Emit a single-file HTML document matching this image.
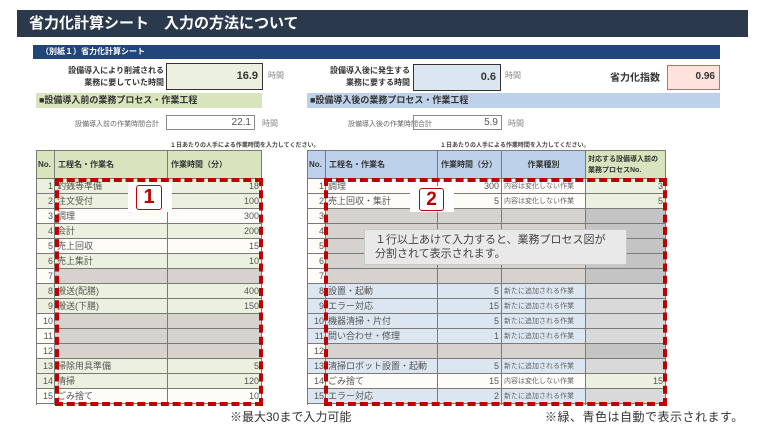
<!DOCTYPE html>
<html><head><meta charset="utf-8"><style>
*{margin:0;padding:0;box-sizing:border-box}
body{width:759px;height:436px;background:#fff;position:relative;overflow:hidden;font-family:"Liberation Sans","Noto Sans CJK JP",sans-serif;color:#333}
.a{position:absolute}
.clip{position:absolute;overflow:hidden}
table{position:absolute;left:0;top:0;border-collapse:collapse;table-layout:fixed;font-size:9px;color:#555}
td{border:1px solid #7a7a7a;height:15px;padding:0 2px;white-space:nowrap;overflow:hidden;line-height:13px}
td.n{text-align:right;padding-right:1px}
td.r{text-align:right}
.g{background:#ebf1de}.w{background:#fdfcf8}.b{background:#dce6f1}.x{background:#d9d9d9}.lg{background:#d7e4bd}
.gy td.f{background:#d6d3cf}
th{border:1px solid #7a7a7a;font-size:8px;font-weight:bold;text-align:left;padding:0 3px;color:#333;height:28px;white-space:nowrap;overflow:hidden}
.t{font-size:7px;color:#666}
.dash{position:absolute;border:4px dashed #c00000}
</style></head><body>
<div class="a" style="left:17px;top:10px;width:731px;height:27px;background:#2b394d;color:#fff;font-size:15px;font-weight:bold;line-height:27px;padding-left:12px">省力化計算シート　入力の方法について</div>
<div class="a" style="left:33px;top:45px;width:687px;height:14px;background:#22467a;color:#fff;font-size:8px;font-weight:bold;line-height:14px;padding-left:8px">（別紙１）省力化計算シート</div>

<div class="a" style="left:60px;top:65px;width:104px;font-size:8px;font-weight:bold;text-align:right;line-height:12px">設備導入により削減される<br>業務に要していた時間</div>
<div class="a" style="left:166px;top:63px;width:97px;height:27px;border:1.5px solid #333;background:#ebf1de;font-size:11px;font-weight:bold;text-align:right;line-height:24px;padding-right:4px">16.9</div>
<div class="a" style="left:268px;top:70px;font-size:8px;color:#888">時間</div>

<div class="a" style="left:310px;top:65px;width:100px;font-size:8px;font-weight:bold;text-align:right;line-height:12px">設備導入後に発生する<br>業務に要する時間</div>
<div class="a" style="left:413px;top:64px;width:88px;height:27px;border:1.5px solid #333;background:#dce6f1;font-size:11px;font-weight:bold;text-align:right;line-height:24px;padding-right:4px">0.6</div>
<div class="a" style="left:505px;top:70px;font-size:8px;color:#888">時間</div>
<div class="a" style="left:610px;top:69px;font-size:10px;font-weight:bold">省力化指数</div>
<div class="a" style="left:667px;top:65px;width:53px;height:25px;border:1.5px solid #e06060;background:#fde3dc;font-size:10px;font-weight:bold;text-align:right;line-height:22px;padding-right:4px">0.96</div>

<div class="a" style="left:36px;top:93px;width:226px;height:15px;background:#d8e4bc;font-size:9px;font-weight:bold;line-height:15px;padding-left:3px">■設備導入前の業務プロセス・作業工程</div>
<div class="a" style="left:307px;top:93px;width:413px;height:15px;background:#bdd2ea;font-size:9px;font-weight:bold;line-height:15px;padding-left:3px">■設備導入後の業務プロセス・作業工程</div>

<div class="a" style="left:75px;top:119px;font-size:7px;color:#666">設備導入前の作業時間合計</div>
<div class="a" style="left:166px;top:115px;width:89px;height:15px;border:1px solid #888;font-size:10px;text-align:right;line-height:13px;padding-right:3px;color:#555">22.1</div>
<div class="a" style="left:262px;top:118px;font-size:8px;color:#888">時間</div>
<div class="a" style="left:348px;top:119px;font-size:7px;color:#666">設備導入後の作業時間合計</div>
<div class="a" style="left:413px;top:115px;width:89px;height:15px;border:1px solid #888;font-size:10px;text-align:right;line-height:13px;padding-right:3px;color:#555">5.9</div>
<div class="a" style="left:508px;top:118px;font-size:8px;color:#888">時間</div>

<div class="a" style="left:170px;top:140px;font-size:6px;font-weight:bold;color:#444">１日あたりの人手による作業時間を入力してください。</div>
<div class="a" style="left:440px;top:140px;font-size:6px;font-weight:bold;color:#444">１日あたりの人手による作業時間を入力してください。</div>

<div class="clip" style="left:36px;top:150px;width:226px;height:255px">
<table style="width:225px">
<colgroup><col style="width:18px"><col style="width:113px"><col style="width:94px"></colgroup>
<tr class="lg"><th style="padding:0 1px">No.</th><th>工程名・作業名</th><th>作業時間（分）</th></tr>
<tr class="g"><td class="n">1</td><td>釣銭等準備</td><td class="r">18</td></tr>
<tr class="g"><td class="n">2</td><td>注文受付</td><td class="r">100</td></tr>
<tr class="w"><td class="n">3</td><td>調理</td><td class="r">300</td></tr>
<tr class="g"><td class="n">4</td><td>会計</td><td class="r">200</td></tr>
<tr class="w"><td class="n">5</td><td>売上回収</td><td class="r">15</td></tr>
<tr class="g"><td class="n">6</td><td>売上集計</td><td class="r">10</td></tr>
<tr class="w gy"><td class="n">7</td><td class="f"></td><td class="f"></td></tr>
<tr class="g"><td class="n">8</td><td>搬送(配膳)</td><td class="r">400</td></tr>
<tr class="g"><td class="n">9</td><td>搬送(下膳)</td><td class="r">150</td></tr>
<tr class="w gy"><td class="n">10</td><td class="f"></td><td class="f"></td></tr>
<tr class="w gy"><td class="n">11</td><td class="f"></td><td class="f"></td></tr>
<tr class="w gy"><td class="n">12</td><td class="f"></td><td class="f"></td></tr>
<tr class="g"><td class="n">13</td><td>掃除用具準備</td><td class="r">5</td></tr>
<tr class="g"><td class="n">14</td><td>清掃</td><td class="r">120</td></tr>
<tr class="w"><td class="n">15</td><td>ごみ捨て</td><td class="r">10</td></tr>
<tr class="w"><td class="n">16</td><td></td><td></td></tr>
</table></div>

<div class="clip" style="left:307px;top:150px;width:359px;height:255px">
<table style="width:358px">
<colgroup><col style="width:18px"><col style="width:112px"><col style="width:64px"><col style="width:84px"><col style="width:80px"></colgroup>
<tr><th style="padding:0 1px;background:#bdd2ea">No.</th><th style="background:#bdd2ea">工程名・作業名</th><th style="background:#bdd2ea">作業時間（分）</th><th style="background:#bdd2ea;text-align:center">作業種別</th><th style="background:#d7e4bd;line-height:11px;font-size:7px;padding:0 2px">対応する設備導入前の<br>業務プロセスNo.</th></tr>
<tr class="w"><td class="n">1</td><td>調理</td><td class="r">300</td><td class="t">内容は変化しない作業</td><td class="r g">3</td></tr>
<tr class="w"><td class="n">2</td><td>売上回収・集計</td><td class="r">5</td><td class="t">内容は変化しない作業</td><td class="r g">5</td></tr>
<tr class="w gy"><td class="n">3</td><td class="f"></td><td class="f"></td><td class="f"></td><td class="f" style="background:#c4c4c4"></td></tr>
<tr class="w gy"><td class="n">4</td><td class="f"></td><td class="f"></td><td class="f"></td><td class="f" style="background:#c4c4c4"></td></tr>
<tr class="w gy"><td class="n">5</td><td class="f"></td><td class="f"></td><td class="f"></td><td class="f" style="background:#c4c4c4"></td></tr>
<tr class="w gy"><td class="n">6</td><td class="f"></td><td class="f"></td><td class="f"></td><td class="f" style="background:#c4c4c4"></td></tr>
<tr class="w gy"><td class="n">7</td><td class="f"></td><td class="f"></td><td class="f"></td><td class="f" style="background:#c4c4c4"></td></tr>
<tr class="b"><td class="n">8</td><td>設置・起動</td><td class="r">5</td><td class="t">新たに追加される作業</td><td class="x"></td></tr>
<tr class="b"><td class="n">9</td><td>エラー対応</td><td class="r">15</td><td class="t">新たに追加される作業</td><td class="x"></td></tr>
<tr class="b"><td class="n">10</td><td>機器清掃・片付</td><td class="r">5</td><td class="t">新たに追加される作業</td><td class="x"></td></tr>
<tr class="b"><td class="n">11</td><td>問い合わせ・修理</td><td class="r">1</td><td class="t">新たに追加される作業</td><td class="x"></td></tr>
<tr class="w gy"><td class="n">12</td><td class="f"></td><td class="f"></td><td class="f"></td><td class="f" style="background:#c4c4c4"></td></tr>
<tr class="b"><td class="n">13</td><td>清掃ロボット設置・起動</td><td class="r">5</td><td class="t">新たに追加される作業</td><td class="x"></td></tr>
<tr class="w"><td class="n">14</td><td>ごみ捨て</td><td class="r">15</td><td class="t">内容は変化しない作業</td><td class="r g">15</td></tr>
<tr class="b"><td class="n">15</td><td>エラー対応</td><td class="r">2</td><td class="t">新たに追加される作業</td><td class="x"></td></tr>
<tr class="w"><td class="n">16</td><td></td><td></td><td></td><td></td></tr>
</table></div>

<div class="dash" style="left:55px;top:178px;width:208px;height:228px"></div>
<div class="dash" style="left:324px;top:178px;width:343px;height:228px"></div>
<div class="a" style="left:128px;top:182px;width:44px;height:30px;background:#fff"></div>
<div class="a" style="left:136px;top:185px;width:26px;height:25px;border:1.5px solid #c00000;border-radius:3px;color:#c00000;font-size:20px;font-weight:bold;text-align:center;line-height:22px">1</div>
<div class="a" style="left:410px;top:186px;width:44px;height:26px;background:#fff"></div>
<div class="a" style="left:419px;top:188px;width:25px;height:23px;border:1.5px solid #c00000;border-radius:3px;color:#c00000;font-size:19px;font-weight:bold;text-align:center;line-height:21px">2</div>

<div class="a" style="left:364px;top:229px;width:263px;height:36px;background:#e9e9e9;border:1px solid #c8c8c8;font-size:11px;color:#444;line-height:14px;padding:3px 0 0 10px;white-space:nowrap">１行以上あけて入力すると、業務プロセス図が<br>分割されて表示されます。</div>

<div class="a" style="left:230px;top:408px;font-size:12px;color:#333">※最大30まで入力可能</div>
<div class="a" style="left:545px;top:408px;font-size:12px;color:#333;letter-spacing:0.5px">※緑、青色は自動で表示されます。</div>
</body></html>
